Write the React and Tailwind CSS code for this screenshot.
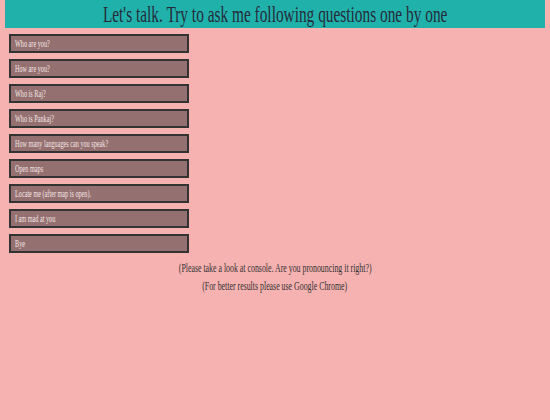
import React from 'react';

const questions = [
    'Who are you?',
    'How are you?',
    'Who is Raj?',
    'Who is Pankaj?',
    'How many languages can you speak?',
    'Open maps',
    'Locate me (after map is open).',
    'I am mad at you',
    'Bye',
];

const App = () => {
    return (
        <div className="min-h-[420px] bg-[#f6b1b1] px-[5px] text-[#333]" style={{ fontFamily: '"Liberation Serif", serif' }}>
            <h1 className="flex h-[28px] justify-center overflow-hidden bg-[#20b2aa] text-[24px] leading-[28px] text-[#262a3a] whitespace-nowrap">
                <span className="inline-block shrink-0 origin-center scale-x-[0.64]">
                    Let's talk. Try to ask me following questions one by one
                </span>
            </h1>
            <ul className="flex flex-col gap-[6px] pt-[6px] pl-[4px]">
                {questions.map(q => (
                    <li key={q} className="flex h-[19px] w-[180px] items-center border-2 border-[#333] bg-[#957070] pl-[4px] text-[10px] text-[#f3e6e6] whitespace-nowrap">
                        <span className="inline-block origin-left scale-x-[0.62]">{q}</span>
                    </li>
                ))}
            </ul>
            <div className="mt-[6px] text-center text-[12px] leading-[18px] whitespace-nowrap">
                <p><span className="inline-block origin-center scale-x-[0.655]">(Please take a look at console. Are you pronouncing it right?)</span></p>
                <p><span className="inline-block origin-center scale-x-[0.655]">(For better results please use Google Chrome)</span></p>
            </div>
        </div>
    );
};

export default App;
